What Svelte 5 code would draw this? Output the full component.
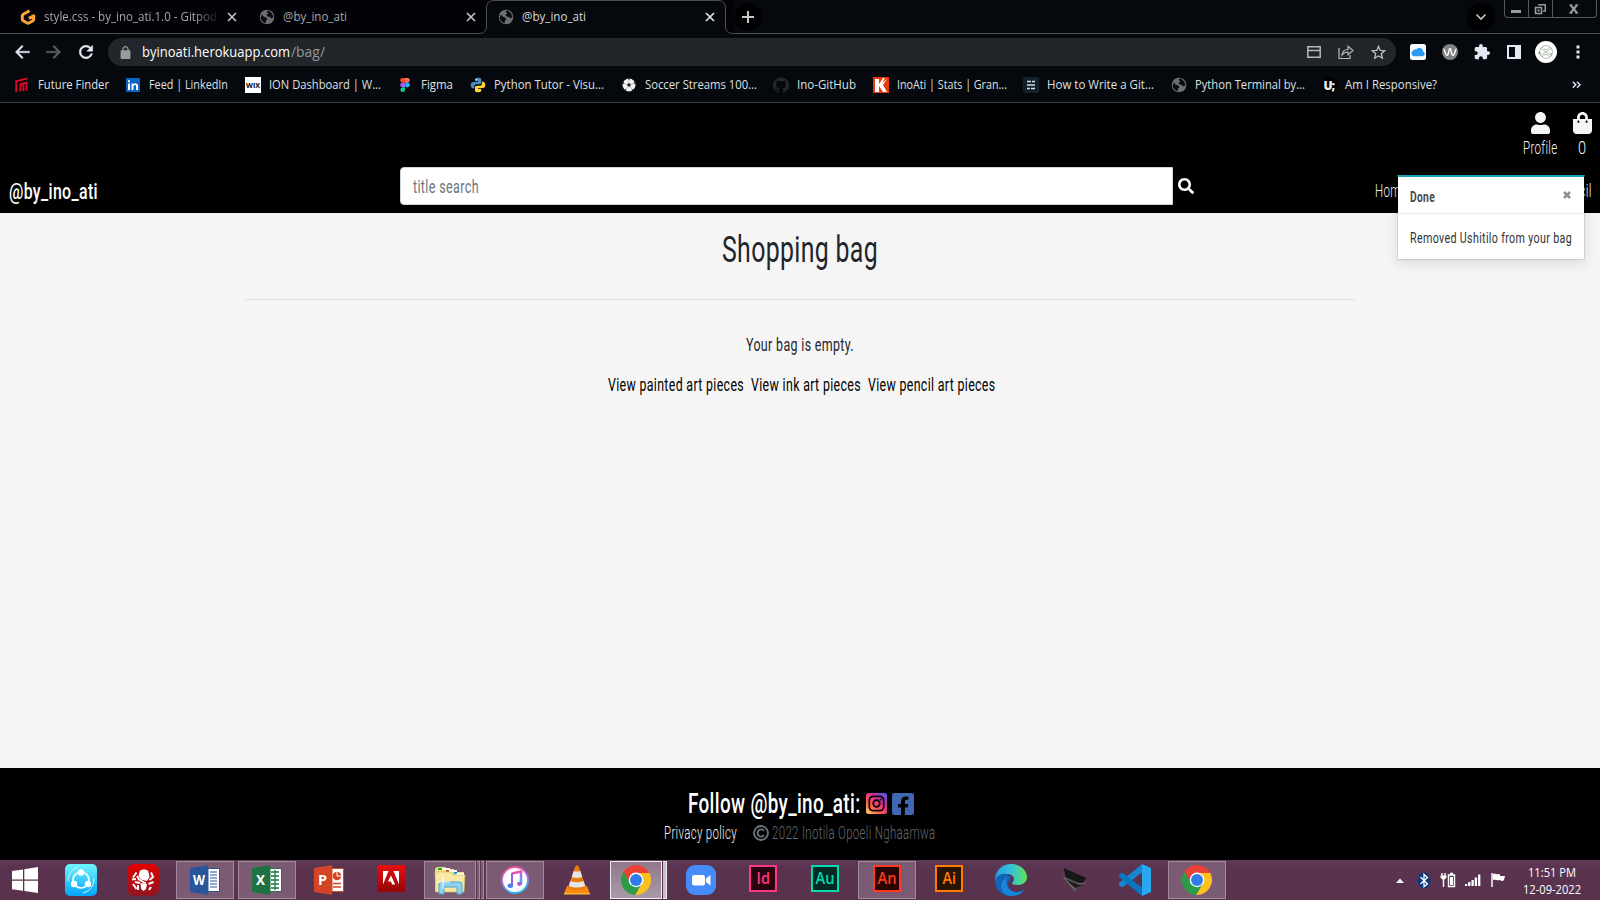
<script>
  const bookmarks = [
    { icon: 'ff', label: 'Future Finder', text: 71, slot: 111 },
    { icon: 'in', label: 'Feed | LinkedIn', text: 79, slot: 120 },
    { icon: 'wix', label: 'ION Dashboard | W...', text: 112, slot: 152 },
    { icon: 'figma', label: 'Figma', text: 32, slot: 73 },
    { icon: 'python', label: 'Python Tutor - Visu...', text: 110, slot: 151 },
    { icon: 'ball', label: 'Soccer Streams 100...', text: 112, slot: 152 },
    { icon: 'github', label: 'Ino-GitHub', text: 59, slot: 100 },
    { icon: 'k', label: 'InoAti | Stats | Gran...', text: 110, slot: 150 },
    { icon: 'lines', label: 'How to Write a Git...', text: 107, slot: 148 },
    { icon: 'globe', label: 'Python Terminal by...', text: 110, slot: 150 },
    { icon: 'u', label: 'Am I Responsive?', text: 92, slot: 120 }
  ];
  const apps = [
    { icon: 'share' }, { icon: 'red' },
    { icon: 'word', open: true }, { icon: 'excel', open: true }, { icon: 'ppt' }, { icon: 'adobe' },
    { icon: 'folder', open: true, stack: 2 }, { icon: 'itunes', open: true }, { icon: 'vlc' },
    { icon: 'chrome', open: true, active: true, stack: 1 }, { icon: 'zoom' }, { icon: 'id' }, { icon: 'au' },
    { icon: 'an', open: true }, { icon: 'ai' }, { icon: 'edge' }, { icon: 'laptop' }, { icon: 'code' },
    { icon: 'chrome', open: true }
  ];
  const tiles = {
    id: ['Id', '#ff3683', '#26050f'],
    au: ['Au', '#00dbb0', '#052a23'],
    an: ['An', '#ff3a20', '#280503'],
    ai: ['Ai', '#ff7c00', '#281403']
  };
  const seams = [0, 72, 144, 216, 288];
</script>

{#snippet ui(text, w, h, base, size, fill, weight = 400)}
  <svg class="ui" width={w} height={h}><text x="0" y={base} font-size={size} {fill} font-weight={weight} textLength={w} lengthAdjust="spacingAndGlyphs">{text}</text></svg>
{/snippet}

{#snippet narrow(text, w, h, base, size, fill, weight = 400)}
  <svg class="narrow" width={w} height={h}><text x="0" y={base} font-size={size} {fill} font-weight={weight} textLength={w} lengthAdjust="spacingAndGlyphs">{text}</text></svg>
{/snippet}

{#snippet globe(size)}
  <svg width={size} height={size} viewBox="0 0 16 16"><circle cx="8" cy="8" r="7.3" fill="#6b6e73" /><path d="M2.800 5.500 4.500 7.500 7 8.500 8.500 10 7 11.500 6.500 14.500 3.500 12.500 1.500 9.500ZM7.500 2.200 10 1.500 13 4.500 14.500 8 12.500 9.500 11 8 8.500 7.500 7.500 5.800 9.300 4.500Z" fill="#0a0b0f" /></svg>
{/snippet}

{#snippet cross(color)}
  <svg width="10" height="10" viewBox="0 0 10 10"><path d="m1 1 8 8M9 1 1 9" stroke={color} stroke-width="1.7" /></svg>
{/snippet}

{#snippet bookmarkIcon(name)}
  {#if name === 'globe'}
    {@render globe(16)}
  {:else}
    <svg width="16" height="16" viewBox="0 0 16 16">
      {#if name === 'ff'}
        <path d="M2.200 15V4.300L13.500 1.300M6.500 14.500V7.200L12.500 5.700V13.500M9.500 14V7" fill="none" stroke="#e3062b" stroke-width="1.800" />
      {:else if name === 'in'}
        <rect x="1" y="1" width="14" height="14" rx="1" fill="#0a66c2" />
        <path d="M3 6.400h2V13H3ZM3 3.300h2v2H3ZM6.500 6.400h1.900v.9c1.100-1.800 4.700-1.400 4.700 1.800V13h-2V9.700c0-2.200-2.600-2-2.600 0V13h-2Z" fill="#fff" />
      {:else if name === 'wix'}
        <rect width="16" height="16" fill="#fff" /><text x="1" y="10.700" font-size="7" font-weight="700" textLength="14" lengthAdjust="spacingAndGlyphs">WIX</text>
      {:else if name === 'figma'}
        <path d="M5.500 1H8v4.700H5.500a2.350 2.350 0 0 1 0-4.700Z" fill="#f24e1e" /><path d="M8 1h2.500a2.350 2.350 0 0 1 0 4.700H8Z" fill="#ff7262" />
        <path d="M5.500 5.700H8v4.700H5.500a2.350 2.350 0 0 1 0-4.700Z" fill="#a259ff" /><circle cx="10.400" cy="8" r="2.400" fill="#1abcfe" /><path d="M5.500 10.400H8v2.300a2.350 2.350 0 1 1-2.500-2.300Z" fill="#0acf83" />
      {:else if name === 'python'}
        <path d="M7.800.7C5 .7 4.800 1.700 4.800 2.700v1.600H8v.6H3.200C1.500 4.900.7 6.200.7 8c0 2 .9 3.200 2.300 3.200h1.300V9.300c0-1.200.9-2 2-2h3.200c1 0 1.800-.8 1.800-1.800V2.700C11.300 1.300 10 .7 7.800.7Z" fill="#4b8bbe" />
        <path d="M8.200 15.300c2.800 0 3-1 3-2v-1.600H8v-.6h4.800c1.700 0 2.500-1.300 2.500-3.100 0-2-.9-3.200-2.300-3.200h-1.100v1.900c0 1.200-.9 2-2 2H6.700c-1 0-1.800.8-1.800 1.800v2.800c0 1.400 1.100 2 3.300 2Z" fill="#ffd43b" />
        <circle cx="6.400" cy="2.600" r=".7" fill="#fff" />
      {:else if name === 'ball'}
        <circle cx="8" cy="8" r="6.500" fill="#f3f3f3" /><path d="m8 6 1.900 1.400-.7 2.200H6.800l-.7-2.200Z" fill="#222" />
        {#each seams as a}<path d="M6.800 1.500h2.400L8 3.200Z" fill="#222" transform="rotate({a} 8 8)" /><path d="M8 3v3" stroke="#999" stroke-width=".5" transform="rotate({a} 8 8)" />{/each}
      {:else if name === 'github'}
        <path d="M8 .2a8 8 0 0 0-2.500 15.600c.4.100.5-.2.500-.4v-1.500c-2.200.5-2.700-1-2.700-1-.4-.9-.9-1.200-.9-1.200-.7-.5.1-.5.1-.5.8.1 1.200.8 1.200.8.7 1.200 1.900.9 2.300.7.1-.5.3-.9.5-1.100-1.800-.2-3.600-.9-3.600-4 0-.8.3-1.600.8-2.100-.1-.2-.4-1 .1-2.100 0 0 .7-.2 2.200.8a7.600 7.600 0 0 1 4 0c1.500-1 2.200-.8 2.200-.8.5 1.100.2 1.900.1 2.100.5.6.8 1.300.8 2.100 0 3.100-1.900 3.800-3.700 4 .3.300.6.800.6 1.500v2.300c0 .2.1.5.5.4A8 8 0 0 0 8 .2Z" fill="#23272b" />
      {:else if name === 'k'}
        <rect width="16" height="16" fill="#e9380d" /><path d="M2 2h4v5l4-6h2L9 6l5-4-4 6 4 7h-4L6 9v6H2Z" fill="#fff" />
      {:else if name === 'lines'}
        <rect width="16" height="16" rx="2" fill="#13212b" /><path d="M4 4.500h4M9 4.500h3M4 8h8M4 11.500h3M8 11.500h4" stroke="#d7dde0" stroke-width="1.400" />
      {:else if name === 'u'}
        <circle cx="8" cy="8" r="8" fill="#000" /><text x="2.500" y="12.500" font-size="12" font-weight="800" fill="#eee" textLength="11.500">U;</text>
      {/if}
    </svg>
  {/if}
{/snippet}

{#snippet office(letter, color)}
  <g transform="translate(1 0)">
    <path d="M18 4.500h11.500v23H18Z" fill="#fff" stroke={color} />
    {#if letter === 'W'}<path d="M20 8h7M20 11h7M20 14h7M20 17h7M20 20h7M20 23h7" stroke={color} stroke-width="1.200" />
    {:else if letter === 'X'}<path d="M19 8h8M19 12h8M19 16h8M19 20h8M19 24h8M23 6v20" stroke={color} stroke-width="1.300" />
    {:else}<circle cx="23" cy="12" r="4.300" fill={color} /><path d="M23 12V7.500M23 12h5" stroke="#fff" /><path d="M19 19.500h8M19 23h8" stroke={color} stroke-width="1.500" />{/if}
    <path d="M0 4 18 1v30L0 28Z" fill={color} />
    <text x={letter === 'W' ? 3 : 4} y="21" font-size="15" font-weight="700" fill="#fff" textLength={letter === 'W' ? 12 : 9} lengthAdjust="spacingAndGlyphs">{letter}</text>
  </g>
{/snippet}

{#snippet appIcon(name)}
  <svg class="app-icon" width="32" height="32" viewBox="0 0 32 32">
    {#if tiles[name]}
      <rect x="3" y="2" width="26" height="25" fill={tiles[name][2]} stroke={tiles[name][1]} stroke-width="2" />
      <text x={name === 'id' || name === 'ai' ? 9.5 : 6.5} y="20" font-size="16.500" fill={tiles[name][1]} font-weight="600" textLength={name === 'id' || name === 'ai' ? 13.5 : 19} lengthAdjust="spacingAndGlyphs">{tiles[name][0]}</text>
    {:else if name === 'share'}
      <defs><linearGradient id="gs" x2="0" y2="1"><stop stop-color="#6ff5fb" /><stop offset="1" stop-color="#04a3fb" /></linearGradient></defs>
      <rect width="32" height="32" rx="5" fill="url(#gs)" /><circle cx="16" cy="16" r="8" fill="none" stroke="#fff" stroke-width="1.700" />
      <circle cx="16" cy="8.500" r="3.200" fill="#fff" /><circle cx="9" cy="20" r="3.200" fill="#fff" /><circle cx="23" cy="20" r="3.200" fill="#fff" />
      <path d="M3 17A14 14 0 0 1 13 3M29 14a14 14 0 0 1-11 15" fill="none" stroke="#c9faff" />
    {:else if name === 'red'}
      <defs><linearGradient id="gr" x2="0" y2="1"><stop stop-color="#e20000" /><stop offset="1" stop-color="#8e1622" /></linearGradient></defs>
      <rect width="32" height="32" rx="7" fill="url(#gr)" />
      <path d="M12.500 8Q13 5.500 17 5.500T21.500 8L22.500 13 20 17 14 15.500 11.500 12ZM13.500 19 20 20 19 25 16.500 27 14 25Z" fill="#fff" />
      <path d="M9.500 8.500 6 13.500M10 12 12 15.500 19 19.500M24 8.500 26 13 22.500 16M5 15.500l4-.5M6 20l3.500 5M26.500 18 21.500 20M24 23l-2 3M11 21v5M8 18l5 1" stroke="#fff" stroke-width="2" fill="none" />
    {:else if name === 'word'}{@render office('W', '#2a5699')}
    {:else if name === 'excel'}{@render office('X', '#207245')}
    {:else if name === 'ppt'}{@render office('P', '#d24625')}
    {:else if name === 'adobe'}
      <defs><linearGradient id="ga" x2="0" y2="1"><stop stop-color="#e60f0f" /><stop offset="1" stop-color="#930609" /></linearGradient></defs>
      <rect x="2" y="1" width="28" height="27" fill="url(#ga)" /><path d="M8 7h5.500L8 20.500ZM18.500 7H24v13.500ZM16 11.500l4.200 9h-3l-1.300-3h-3Z" fill="#fff" />
    {:else if name === 'folder'}
      <path d="M1 5 3 3h8l2 2h7l1 3h9v20H1Z" fill="#f3dc7b" /><path d="M4 4h4v2H4Z" fill="#17b624" /><path d="M8 4h8v2H8ZM15 6h8v2h-8ZM22 9h8v2h-8Z" fill="#fff" /><path d="M12 6h3v2h-3Z" fill="#d04b21" /><path d="M20 8h3v2h-3Z" fill="#1798dd" />
      <path d="M1 8h15l3 3h12l-1 17H2Z" fill="#f7e9a3" stroke="#d8bd57" stroke-width=".6" /><path d="M5 30V20q0-2 2-2h18q3 0 3 2v10h-5v-7H10v7Z" fill="#8ed3ed" stroke="#4aa5cd" /><path d="M9 12v13M3 18h13" stroke="#fff" />
    {:else if name === 'itunes'}
      <defs><linearGradient id="gi" x2=".3" y2="1"><stop stop-color="#fb4e7a" /><stop offset=".5" stop-color="#bd68e8" /><stop offset="1" stop-color="#28b9f4" /></linearGradient></defs>
      <circle cx="16" cy="16" r="13" fill="#fff" stroke="url(#gi)" stroke-width="1.800" /><path d="M13 9.500 22 7.500v12.200" fill="none" stroke="url(#gi)" stroke-width="2.500" /><path d="M13 9v12.500" stroke="#995be4" stroke-width="2" /><ellipse cx="11.300" cy="21.800" rx="2.800" ry="2.200" fill="#4b7ff0" /><ellipse cx="20.500" cy="19.800" rx="2.500" ry="2.100" fill="#af58df" />
    {:else if name === 'vlc'}
      <path d="M6 22h20l3 8H3Z" fill="#fb8c10" /><path d="m14 3 2-2 2 2 7 21c-3 3-15 3-18 0Z" fill="#ef7b0b" /><path d="m12.700 7-2 6q5.300 2 10.600 0l-2-6q-3 1-6.600 0ZM9.300 17l-1.600 5q8.300 3 16.600 0l-1.600-5q-6.700 2.500-13.400 0Z" fill="#e3e5e6" /><path d="M3 29h26v1.500H3Z" fill="#ffb42e" />
    {:else if name === 'chrome'}
      <g transform="translate(-.3 -.4) scale(.68)"><path d="M43.600 14A22 22 0 0 0 5.500 12l9.800 17A10 10 0 0 1 24 14Z" fill="#ea4335" /><path d="M5.500 12a22 22 0 0 0 17.350 34l9.850-17a10 10 0 0 1-17.400 0Z" fill="#2b9d49" /><path d="M22.850 46A22 22 0 0 0 43.600 14H24a10 10 0 0 1 8.700 15Z" fill="#fcc01f" /><circle cx="24" cy="24" r="10.800" fill="#fff" /><circle cx="24" cy="24" r="8.800" fill="#2f7bea" /></g>
    {:else if name === 'zoom'}
      <rect x="1" y="1" width="30" height="30" rx="9" fill="#458cf8" /><rect x="7" y="11" width="13" height="10.500" rx="2.300" fill="#fff" /><path d="m21 14.500 4.500-3.500v10.500L21 18Z" fill="#fff" />
    {:else if name === 'edge'}
      <defs><linearGradient id="ge"><stop stop-color="#2c9bd8" /><stop offset=".5" stop-color="#35c1df" /><stop offset="1" stop-color="#5ee251" /></linearGradient></defs>
      <path d="M0 15C1 5 8 0 16 0c9 0 16 6 16 13 0 5-4 8-9 8-4 0-6-1-6-2s2-1 2-4-3-5-7-5c-6 0-10 3-12 8Z" fill="url(#ge)" /><path d="M0 17C1 12 6 9 11 10c5 1 6 5 3 7-3 5 1 10 7 11 4 0 6-1 9-3-3 5-8 7-13 7C7 32 0 26 0 17Z" fill="#1264b7" /><path d="M11 31C4 26 5 16 13 13c-3 4-2 9 1 12 4 4 10 4 15 1-4 6-12 7-18 5Z" fill="#1886d9" />
    {:else if name === 'laptop'}
      <g transform="translate(1.500 1)"><path d="m5 3 23 10-4 6L8 14Z" fill="#171717" /><path d="m4 12 5 1 14 6-7 8Z" fill="#55504e" /><path d="m6 14 12 5 6 1-7 3Z" fill="#1d1b1b" /><path d="m5 12 12 13M19 19l8-1" stroke="#8b8b8b" stroke-width=".7" fill="none" /></g>
    {:else if name === 'code'}
      <path d="m0 21 3 2.500 20-15V0L0 19Z" fill="#1688d0" /><path d="m0 11 3-2.500 20 15V32L0 13Z" fill="#0877bf" /><path d="m23 0 9 4v24l-9 4Z" fill="#2aa7f0" />
    {/if}
  </svg>
{/snippet}

<div class="screen">
  <div class="tabs">
    <svg class="outline" width="1600" height="35"><path d="M0 33.500H479q7.500 0 7.500-7.500V8q0-7.500 7.500-7.500H718q7.500 0 7.500 7.500V26q0 7.500 7.500 7.500H1600V35H0ZM733 0H1600V34H733Z" fill="#05080d" /><path d="M0 33.500H479q7.500 0 7.500-7.500V8q0-7.500 7.500-7.500H718q7.500 0 7.500 7.500V26q0 7.500 7.500 7.500H1600" fill="none" stroke="#4b4e52" /></svg>
    <div class="tab first">
      <svg width="16" height="16" viewBox="0 0 16 16"><path d="M9.500 1.800 3.300 5.200q-1 .6-1 1.800v3.200q0 1 .9 1.600l3.900 2.200q.9.500 1.800 0l4-2.200q.8-.5.8-1.500V6.800L8.800 9.400" fill="none" stroke="#ffa434" stroke-width="3" stroke-linejoin="round" /></svg>
      <div class="title fade">{@render ui('style.css - by_ino_ati.1.0 - Gitpod', 173, 34, 21, 12.5, '#a5a7aa')}</div>
      {@render cross('#c4c4c4')}
    </div>
    <div class="tab second">
      {@render globe(16)}
      <div class="title">{@render ui('@by_ino_ati', 64, 34, 21, 12.5, '#a5a7aa')}</div>
      {@render cross('#c4c4c4')}
    </div>
    <div class="tab third">
      {@render globe(16)}
      <div class="title">{@render ui('@by_ino_ati', 64, 34, 21, 12.5, '#d8dadd')}</div>
      {@render cross('#e4e4e4')}
    </div>
    <div class="round plus"><svg width="12" height="12"><path d="M6 0v12M0 6h12" stroke="#c8c8c8" stroke-width="2" /></svg></div>
    <div class="round chev"><svg width="12" height="12"><path d="m1.500 3.500 4.500 4.500 4.500-4.500" stroke="#c8c8c8" stroke-width="1.600" fill="none" /></svg></div>
    <div class="window">
      <span><svg width="12" height="16"><rect x="1" y="9" width="10" height="3" fill="#9b9b9b" /></svg></span>
      <span><svg width="12" height="16"><path d="M5 4.500V3.700h6.300V10H9M1.500 6.500h6v6h-6Z" fill="none" stroke="#9b9b9b" stroke-width="1.600" /><rect x="3.500" y="8.500" width="2" height="2" fill="#9b9b9b" /></svg></span>
      <span><svg width="12" height="16"><path d="m2.500 4 6.500 8M9 4l-6.500 8" stroke="#9b9b9b" stroke-width="2" /><path d="M1 4h3.500M7 4h3.500M1 12h3.500M7 12h3.500" stroke="#9b9b9b" stroke-width="1" /></svg></span>
    </div>
  </div>

  <div class="toolbar">
    <svg width="20" height="20" viewBox="0 0 24 24"><path d="M21 11H7.830l5.590-5.590L12 4l-8 8 8 8 1.410-1.410L7.830 13H21v-2z" fill="#e9eaf5" stroke="#e9eaf5" stroke-width=".5" /></svg>
    <svg width="20" height="20" viewBox="0 0 24 24"><path d="m12 4-1.410 1.410L16.170 11H3v2h13.170l-5.580 5.590L12 20l8-8z" fill="#5f6165" stroke="#5f6165" stroke-width=".5" /></svg>
    <svg width="20" height="20" viewBox="0 0 24 24"><path d="M17.650 6.350C16.200 4.900 14.210 4 12 4c-4.420 0-7.990 3.580-7.990 8s3.570 8 7.990 8c3.730 0 6.840-2.550 7.730-6h-2.080c-.82 2.330-3.040 4-5.650 4-3.310 0-6-2.690-6-6s2.690-6 6-6c1.660 0 3.140.69 4.220 1.780L13 11h7V4l-2.350 2.350z" fill="#e9eaf5" stroke="#e9eaf5" stroke-width=".6" /></svg>
    <div class="omnibox">
      <svg class="lock" width="13" height="13" viewBox="3 1 18 21"><path d="M18 8h-1V6c0-2.760-2.240-5-5-5S7 3.240 7 6v2H6c-1.100 0-2 .9-2 2v10c0 1.100.9 2 2 2h12c1.100 0 2-.9 2-2V10c0-1.100-.9-2-2-2zM9 6c0-1.660 1.340-3 3-3s3 1.340 3 3v2H9V6z" fill="#9a9ca0" /></svg>
      {@render ui('byinoati.herokuapp.com', 148, 28, 19, 14, '#fff')}
      <div class="path">{@render ui('/bag/', 34, 28, 19, 14, '#94969a')}</div>
      <div class="actions">
        <svg width="16" height="16"><path d="M1.800 2.800h12.400v10.400H1.800ZM1.800 6.500h12.400" fill="none" stroke="#b9b9b9" stroke-width="1.500" /></svg>
        <svg width="16" height="16"><path d="M1 4v10.500h11V11M4 11c.5-4 2.500-5.500 6-5.500V2.200l5 4.300-5 4.300V8C7 8 5.500 9 4 11Z" fill="none" stroke="#b9b9b9" stroke-width="1.200" /></svg>
        <svg width="17" height="17" viewBox="1 1 22 22"><path d="m22 9.240-7.190-.62L12 2 9.190 8.630 2 9.240l5.460 4.730L5.820 21 12 17.270 18.180 21l-1.630-7.030L22 9.240zM12 15.400l-3.760 2.270 1-4.280-3.320-2.880 4.380-.38L12 6.100l1.710 4.040 4.380.38-3.320 2.880 1 4.280L12 15.400z" fill="#c7c7c7" /></svg>
      </div>
    </div>
    <div class="extensions">
      <svg width="16" height="16"><rect width="16" height="16" rx="2.500" fill="#f9fbfd" /><path d="M4 12.300a3 3 0 0 1-.8-5.700 3.200 3.200 0 0 1 3-1.200 3.900 3.900 0 0 1 7 2.200 2.500 2.500 0 0 1-.4 4.700Z" fill="#2a9af4" /></svg>
      <svg width="16" height="16"><circle cx="8" cy="8" r="8" fill="#818181" /><path d="M1.500 5C3 5 3 11.300 5 11.300S6.500 4.500 8 4.500s1 6.800 3 6.800S13 5 14.500 5" stroke="#fff" stroke-width="1.400" fill="none" /></svg>
      <svg width="16" height="16" viewBox="1 1 22 22"><path d="M20.500 11H19V7c0-1.100-.9-2-2-2h-4V3.500C13 2.120 11.880 1 10.500 1S8 2.120 8 3.500V5H4c-1.100 0-1.990.9-1.990 2v3.800H3.500c1.490 0 2.700 1.210 2.700 2.700s-1.210 2.700-2.700 2.700H2V20c0 1.100.9 2 2 2h3.800v-1.500c0-1.490 1.210-2.700 2.700-2.700 1.490 0 2.700 1.210 2.700 2.700V22H17c1.100 0 2-.9 2-2v-4h1.500c1.380 0 2.500-1.120 2.500-2.500S21.880 11 20.500 11z" fill="#e6e7f5" /></svg>
      <svg width="16" height="16"><path d="M1 1h14v14H1Zm2 2v10h6V3Z" fill="#e6e7f5" fill-rule="evenodd" /></svg>
      <svg class="avatar" width="22" height="22"><circle cx="11" cy="11" r="11" fill="#fff" /><circle cx="11" cy="11" r="6.500" fill="none" stroke="#aaa" stroke-width=".8" /><path d="m5 7 12 8M5 15l12-8M7 6l4 3 4-3M7 16l4-3 4 3" stroke="#8b8b8b" stroke-width=".6" fill="none" /><circle cx="4.500" cy="12" r="1" fill="#41a13d" /><circle cx="16" cy="13" r="1" fill="#8bbf62" /></svg>
      <svg class="dots" width="4" height="16"><path d="M.5 1.500h3v3h-3ZM.5 6.500h3v3h-3ZM.5 11.500h3v3h-3Z" fill="#e6e7f5" /></svg>
    </div>
  </div>

  <div class="bookmarks">
    {#each bookmarks as b}
      <div class="bookmark" style="width:{b.slot}px">
        {@render bookmarkIcon(b.icon)}
        {@render ui(b.label, b.text, 34, 20.5, 12.3, '#dfe1e5')}
      </div>
    {/each}
    <svg class="more" width="9" height="8"><path d="m.8.800 3 3-3 3M5 .8l3 3-3 3" fill="none" stroke="#dddff0" stroke-width="1.500" /></svg>
  </div>

  <header>
    <div class="account">
      <div class="link">
        <svg width="19" height="22" viewBox="0 0 448 512" preserveAspectRatio="none"><path d="M224 256c70.700 0 128-57.300 128-128S294.700 0 224 0 96 57.300 96 128s57.300 128 128 128zm89.600 32h-16.700c-22.200 10.200-46.900 16-72.900 16s-50.600-5.800-72.900-16h-16.700C60.200 288 0 348.200 0 422.400V464c0 26.500 21.500 48 48 48h352c26.500 0 48-21.500 48-48v-41.600c0-74.200-60.200-134.400-134.400-134.400z" fill="#f5f5f5" /></svg>
        {@render narrow('Profile', 34.5, 24, 20, 18, '#f5f5f5', 350)}
      </div>
      <div class="link">
        <svg width="19" height="22" viewBox="0 0 448 512" preserveAspectRatio="none"><path d="M352 160v-32C352 57.420 294.579 0 224 0 153.420 0 96 57.420 96 128v32H0v272c0 44.183 35.817 80 80 80h288c44.183 0 80-35.817 80-80V160h-96zm-192-32c0-35.290 28.710-64 64-64s64 28.710 64 64v32H160v-32zm160 120c-13.255 0-24-10.745-24-24s10.745-24 24-24 24 10.745 24 24-10.745 24-24 24zm-192 0c-13.255 0-24-10.745-24-24s10.745-24 24-24 24 10.745 24 24-10.745 24-24 24z" fill="#f5f5f5" /></svg>
        {@render narrow('0', 8.5, 24, 20, 18, '#f5f5f5', 350)}
      </div>
    </div>
    <div class="nav">
      <div class="brand">{@render narrow('@by_ino_ati', 89, 46, 32, 22.5, '#fff', 500)}</div>
      <div class="search">{@render narrow('title search', 66, 36, 25, 17.8, '#6c757d')}</div>
      <svg class="glass" width="16" height="16" viewBox="0 0 512 512"><path d="M505 442.700L405.300 343c-4.500-4.500-10.600-7-17-7H372c27.600-35.300 44-79.700 44-128C416 93.100 322.900 0 208 0S0 93.100 0 208s93.100 208 208 208c48.300 0 92.700-16.400 128-44v16.300c0 6.400 2.500 12.500 7 17l99.700 99.700c9.400 9.400 24.600 9.400 33.900 0l28.300-28.300c9.400-9.400 9.400-24.600.1-34zM208 336c-70.700 0-128-57.200-128-128 0-70.700 57.200-128 128-128 70.700 0 128 57.200 128 128 0 70.700-57.200 128-128 128z" fill="#fff" /></svg>
      <div class="menu">
        {@render narrow('Home', 32, 46, 30, 18, '#f5f5f5', 350)}
        {@render narrow('Pencil', 35, 46, 30, 18, '#f5f5f5', 350)}
      </div>
    </div>
    <div class="toast">
      <div class="toast-head">
        {@render narrow('Done', 25, 36, 24.5, 15.5, '#42494f', 700)}
        <svg width="8" height="8"><path d="m1 1 6 6M7 1 1 7" stroke="#8b8f93" stroke-width="2.500" /></svg>
      </div>
      <div class="toast-body">{@render narrow('Removed Ushitilo from your bag', 162, 45, 28.5, 15.5, '#303437')}</div>
    </div>
  </header>

  <main>
    <div class="container">
      {@render narrow('Shopping bag', 156, 86, 48.5, 36, '#212529')}
      <hr />
      {@render narrow('Your bag is empty.', 108, 66, 51, 17.8, '#212529')}
      <div class="choices">
        {@render narrow('View painted art pieces', 136, 40, 25, 17.8, '#000')}
        {@render narrow('View ink art pieces', 110, 40, 25, 17.8, '#000')}
        {@render narrow('View pencil art pieces', 127.5, 40, 25, 17.8, '#000')}
      </div>
    </div>
  </main>

  <footer>
    <div class="follow">
      {@render narrow('Follow @by_ino_ati:', 172.5, 56, 45, 27, '#fff', 500)}
      <svg class="insta" width="21" height="21" viewBox="0 0 21 21"><defs><linearGradient id="ig" x1="0" y1="1" x2=".9" y2="0"><stop stop-color="#ffd65e" /><stop offset=".35" stop-color="#ff5f4c" /><stop offset=".65" stop-color="#d92e8c" /><stop offset="1" stop-color="#4f55ee" /></linearGradient></defs><rect width="21" height="21" rx="2.500" fill="url(#ig)" /><rect x="3.300" y="3.300" width="14.400" height="14.400" rx="4" fill="none" stroke="#08000a" stroke-width="1.700" /><circle cx="10.500" cy="10.500" r="3.300" fill="none" stroke="#08000a" stroke-width="1.700" /><circle cx="14.700" cy="6.400" r="1" fill="#08000a" /></svg>
      <svg class="fb" width="22" height="22" viewBox="0 32 448 448" preserveAspectRatio="none"><path d="M400 32H48A48 48 0 0 0 0 80v352a48 48 0 0 0 48 48h137.250V327.690h-63V256h63v-54.640c0-62.150 37-96.480 93.670-96.480 27.140 0 55.520 4.840 55.520 4.840v61h-31.270c-30.810 0-40.420 19.120-40.420 38.730V256h68.780l-11 71.690h-57.780V480H400a48 48 0 0 0 48-48V80a48 48 0 0 0-48-48z" fill="#4267b2" /></svg>
    </div>
    <div class="legal">
      {@render narrow('Privacy policy', 73, 36, 15, 18, '#f5f5f5', 350)}
      <svg class="copy" width="16" height="16"><circle cx="8" cy="8" r="7" fill="none" stroke="#6c757d" stroke-width="1.800" /><path d="M11 5.800A3.600 3.600 0 1 0 11 10.200" fill="none" stroke="#6c757d" stroke-width="1.900" /></svg>
      {@render narrow('2022 Inotila Opoeli Nghaamwa', 163.5, 36, 15, 18, '#666b70', 300)}
    </div>
  </footer>

  <div class="taskbar">
    <div class="start"><svg width="26" height="26"><path d="m0 4 11-1.600v10H0ZM12.300 2.200 26 0v12.400H12.300ZM0 13.700h11v10.100L0 22.200ZM12.300 13.700H26V26l-13.700-2Z" fill="#fff" /></svg></div>
    {#each apps as app}
      <div class="slot">
        <div class="task" class:open={app.open} class:active={app.active} class:stacked={app.stack}>{@render appIcon(app.icon)}</div>
        {#if app.stack}{#each Array(app.stack) as _}<i class:active={app.active}></i>{/each}{/if}
      </div>
    {/each}
    <div class="tray">
      <svg width="8" height="5"><path d="m0 5 4-4.500L8 5Z" fill="#f4f4f4" /></svg>
      <svg width="14" height="17"><ellipse cx="7" cy="8.500" rx="6.200" ry="8" fill="#07397c" /><path d="m3.500 5 7 7L7 14.700V2.500l3.500 3-7 6.500" fill="none" stroke="#fff" stroke-width="1.300" /></svg>
      <svg width="16" height="16"><path d="M8.500 3h6v11.500h-6ZM10 1.500h3M2 1v3M5 1v3M3.500 6.500v8.500" fill="none" stroke="#fff" stroke-width="1.400" /><path d="M.5 3.500h6v2l-2 2h-2l-2-2Z" fill="#fff" /><rect x="10" y="5" width="3" height="8" fill="#fff" /></svg>
      <svg width="16" height="12"><path d="M1 12v-2M4.300 12V8M7.600 12V6M10.900 12V3.500M14.200 12V.5" stroke="#fff" stroke-width="2.300" /></svg>
      <svg width="16" height="16"><path d="M2 1v14" stroke="#fff" stroke-width="1.500" /><path d="M3 2c3-1 4 1 7 0v6C7 9 6 7 3 8ZM10 4h5l-1 4q-2 2-4 0Z" fill="#fff" /></svg>
    </div>
    <div class="clock">
      {@render ui('11:51 PM', 48, 17, 16.5, 12.3, '#fff')}
      {@render ui('12-09-2022', 58, 17, 16.5, 12.3, '#fff')}
    </div>
  </div>
</div>

<style>
  :global(body) { overflow: hidden; background: #000; }
  .screen { width: 1600px; height: 900px; display: flex; flex-direction: column; background: #05080d; font-family: 'Open Sans', 'Noto Sans', sans-serif; }
  .screen > * { flex: none; }
  svg { display: block; flex: none; }
  text { white-space: pre; }
  .ui { font-family: 'Open Sans', 'Noto Sans', sans-serif; overflow: visible; }
  .narrow { font-family: Roboto, 'Liberation Sans', sans-serif; overflow: visible; }
  .narrow text { letter-spacing: .5px; }

  .tabs { height: 34px; display: flex; align-items: center; position: relative; background: #020207; }
  .outline { position: absolute; left: 0; top: 0; }
  .tab { height: 34px; display: flex; align-items: center; position: relative; box-sizing: border-box; flex: none; }
  .tab.first { width: 247px; padding-left: 20px; }
  .tab.first::after { content: ''; width: 1px; height: 20px; background: #4a4c50; margin-left: 10px; }
  .tab.second { width: 239px; padding-left: 12px; }
  .tab.third { width: 240px; padding-left: 12px; }
  .title { height: 34px; margin-left: 8px; flex: none; width: 183px; }
  .tab.second .title { width: 183px; }
  .tab.third .title { width: 183px; }
  .fade { mask-image: linear-gradient(90deg, #000 150px, transparent 176px); }
  .round { width: 28px; height: 28px; border-radius: 50%; background: #010103; display: grid; place-items: center; position: relative; }
  .plus { margin-left: 8px; }
  .chev { margin-left: auto; margin-right: 9px; }
  .window { align-self: flex-start; position: relative; height: 18px; width: 93px; margin-right: 3px; box-sizing: border-box; border: 1px solid #56585b; border-top: 0; border-radius: 0 0 4px 4px; display: flex; }
  .window span { width: 24px; border-right: 1px solid #56585b; display: grid; place-items: center; padding-right: 2px; box-sizing: border-box; }
  .window span:last-child { flex: 1; border: 0; }

  .toolbar { height: 35px; display: flex; align-items: center; padding: 1px 19px 0 12px; box-sizing: border-box; gap: 12px; }
  .omnibox { width: 1288px; height: 28px; border-radius: 14px; background: #22252a; display: flex; align-items: center; box-sizing: border-box; padding: 0 9px 0 11.500px; flex: none; }
  .lock { margin-right: 9.500px; margin-left: -.5px; }
  .path { margin-left: 1.500px; }
  .actions { margin-left: auto; display: flex; gap: 16px; align-items: center; }
  .extensions { display: flex; align-items: center; gap: 16px; margin-left: 2px; }
  .avatar { margin: 0 -3px; }
  .dots { margin-left: 6px; }

  .bookmarks { height: 35px; border-bottom: 1px solid #3b3e43; box-sizing: border-box; display: flex; align-items: center; padding: 0 19px 0 14px; margin-top: -1px; }
  .bookmark { display: flex; align-items: center; gap: 8px; flex: none; height: 34px; }
  .more { margin-left: auto; }

  header { height: 110px; background: #000; position: relative; }
  .account { height: 60px; box-sizing: border-box; display: flex; justify-content: flex-end; align-items: flex-start; padding: 9px 8px 0 0; gap: 15.500px; }
  .link { display: flex; flex-direction: column; align-items: center; }
  .nav { height: 50px; display: flex; align-items: flex-start; padding: 4px 8px 0 8.500px; box-sizing: border-box; }
  .brand { width: 391.500px; }
  .search { width: 773px; height: 38px; box-sizing: border-box; border: 1px solid #ced4da; background: #fff; border-radius: 4px 0 0 4px; padding-left: 12px; overflow: hidden; }
  .glass { margin: 11px 0 0 5px; }
  .menu { margin-left: auto; width: 217.500px; display: flex; justify-content: space-between; }
  .toast { position: absolute; right: 15px; top: 72px; width: 188px; box-sizing: border-box; height: 85px; background: #fff; border: 1px solid rgba(0, 0, 0, .1); border-top: 2px solid #17a2b8; box-shadow: 0 4px 12px rgba(0, 0, 0, .1); background-clip: padding-box; }
  .toast-head { height: 36px; border-bottom: 1px solid #ececec; display: flex; justify-content: space-between; padding: 0 13px 0 11.500px; }
  .toast-head > svg:last-child { margin-top: 13.500px; }
  .toast-body { padding-left: 11.500px; height: 45px; }

  main { height: 555px; background: #f5f5f5; }
  .container { width: 1110px; margin: 0 auto; display: flex; flex-direction: column; align-items: center; }
  hr { width: 100%; height: 1px; border: 0; margin: 0; background: #dbdbdb; }
  .choices { display: flex; gap: 7.200px; padding-left: 4px; }

  footer { height: 92px; background: #000; }
  .follow { height: 56px; display: flex; justify-content: center; padding-left: 1px; }
  .insta { margin: 25px 5px 0 5.500px; }
  .fb { margin-top: 25px; }
  .legal { height: 36px; display: flex; justify-content: center; }
  .copy { margin: 1px 3px 0 16px; }

  .taskbar { height: 40px; background: linear-gradient(#5f3955, #5a3350 8px, #58324d); display: flex; align-items: center; }
  .start { width: 52px; padding-left: 12px; box-sizing: border-box; }
  .slot { width: 62px; display: flex; gap: 1px; flex: none; }
  .task { width: 58px; height: 38px; box-sizing: border-box; display: grid; place-items: center; border: 1px solid transparent; }
  .task.stacked { width: 52px; }
  .task.open { background: #7b5b73; border-color: #a38c9e; }
  .task.active { background: linear-gradient(#8f788a, #aa9aa7); border-color: #f1edf0; }
  .slot i { width: 3px; height: 38px; box-sizing: border-box; border: 1px solid #a38c9e; border-left: 0; background: #7b5b73; }
  .slot i.active { border-color: #f1edf0; background: #c9bec7; width: 4px; }
  .tray { margin-left: auto; display: flex; align-items: center; gap: 9px; margin-right: 17px; }
  .tray svg:first-child { margin-right: 4px; }
  .clock { display: flex; flex-direction: column; align-items: center; width: 58px; height: 40px; margin-right: 19px; }
</style>
